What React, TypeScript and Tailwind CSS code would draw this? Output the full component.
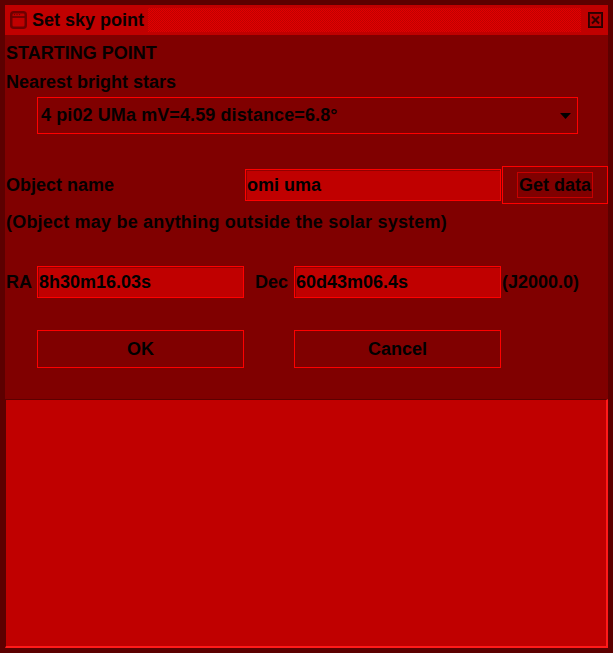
import React from 'react';

const font = "font-['Liberation_Sans',Arial,sans-serif]";

const Field = ({ value, className = '' }: { value: string; className?: string }) => (
    <div className={`h-[32px] bg-[#c00000] border border-[#ff0000] shadow-[inset_1px_1px_0_#900000] flex items-center pl-[1px] text-[18px] font-bold text-black ${className}`}>
        {value}
    </div>
);

const Button = ({ label }: { label: string }) => (
    <div className="w-[207px] h-[38px] border border-[#ff0000] bg-[#800000] flex items-center justify-center text-[18px] font-bold text-black">
        {label}
    </div>
);

export default function App() {
    return (
        <div className={`w-[613px] h-[653px] bg-[#5c0000] p-[5px] flex flex-col ${font}`}>
            {/* title bar */}
            <div className="h-[30px] bg-[#c00000] flex items-center shrink-0">
                <svg width="17" height="18" viewBox="0 0 17 18" className="ml-[5px] mr-[5px]">
                    <rect x="1.25" y="1.25" width="14.5" height="15.5" rx="2.5" fill="none" stroke="#6e0000" strokeWidth="2.5" />
                    <line x1="1" y1="6" x2="16" y2="6" stroke="#6e0000" strokeWidth="1.8" />
                    <circle cx="4.5" cy="3.6" r="0.7" fill="#6e0000" />
                    <circle cx="7" cy="3.6" r="0.7" fill="#6e0000" />
                    <circle cx="9.5" cy="3.6" r="0.7" fill="#6e0000" />
                </svg>
                <span className="text-[18px] font-bold text-[#0a0000]">Set sky point</span>
                <div className="ml-[4px] h-[24px] flex-1 bg-[conic-gradient(#e20000_25%,#c00000_0_50%,#e20000_0_75%,#c00000_0)] bg-[length:2px_2px]" />
                <svg width="15" height="16" viewBox="0 0 15 16" className="ml-[7px] mr-[5px]">
                    <rect x="0.5" y="0.5" width="14" height="15" fill="#ff1010" stroke="#2a0000" />
                    <rect x="1.5" y="1.5" width="12" height="13" fill="#b00000" stroke="#3a0000" />
                    <path d="M4 4.5 L11 11.5 M11 4.5 L4 11.5" stroke="#300000" strokeWidth="2" />
                </svg>
            </div>

            {/* dialog body */}
            <div className="flex-1 bg-[#800000] flex flex-col text-[#050000]">
                <div className="pl-[1px] mt-[8px] text-[18px] leading-[20px] font-bold">STARTING POINT</div>
                <div className="pl-[1px] mt-[9px] text-[18px] leading-[20px] font-bold">Nearest bright stars</div>

                <div className="ml-[32px] mt-[5px] w-[541px] h-[37px] border border-[#ff0000] bg-[#800000] flex items-center pl-[3px] pr-[6px] text-[18px] font-bold tracking-[0.1px]">
                    <span className="flex-1">4 pi02 UMa mV=4.59 distance=6.8°</span>
                    <svg width="11" height="6" viewBox="0 0 11 6">
                        <path d="M0 0 H11 L5.5 6 Z" fill="#000" />
                    </svg>
                </div>

                <div className="mt-[32px] h-[38px] flex items-center">
                    <span className="pl-[1px] w-[240px] text-[18px] font-bold">Object name</span>
                    <Field value="omi uma" className="w-[256px]" />
                    <div className="ml-[1px] w-[106px] h-[38px] border border-[#ff0000] bg-[#800000] flex items-center justify-center">
                        <div className="border border-[#c80000] px-[1px] h-[26px] flex items-center text-[18px] font-bold">Get data</div>
                    </div>
                </div>

                <div className="pl-[1px] mt-[8px] text-[18px] leading-[20px] font-bold tracking-[0.2px]">(Object may be anything outside the solar system)</div>

                <div className="mt-[34px] h-[32px] flex items-center text-[18px] font-bold">
                    <span className="pl-[1px] w-[32px]">RA</span>
                    <Field value="8h30m16.03s" className="w-[207px]" />
                    <span className="ml-[11px] w-[39px]">Dec</span>
                    <Field value="60d43m06.4s" className="w-[207px]" />
                    <span className="ml-[1px]">(J2000.0)</span>
                </div>

                <div className="mt-[32px] flex gap-[50px] pl-[32px]">
                    <Button label="OK" />
                    <Button label="Cancel" />
                </div>

                <div className="mt-[31px] flex-1 bg-[#c00000] border-t border-l border-t-[#5c0000] border-l-[#5c0000] border-b-2 border-r-2 border-b-[#ff1a1a] border-r-[#ff1a1a]" />
            </div>
        </div>
    );
}
